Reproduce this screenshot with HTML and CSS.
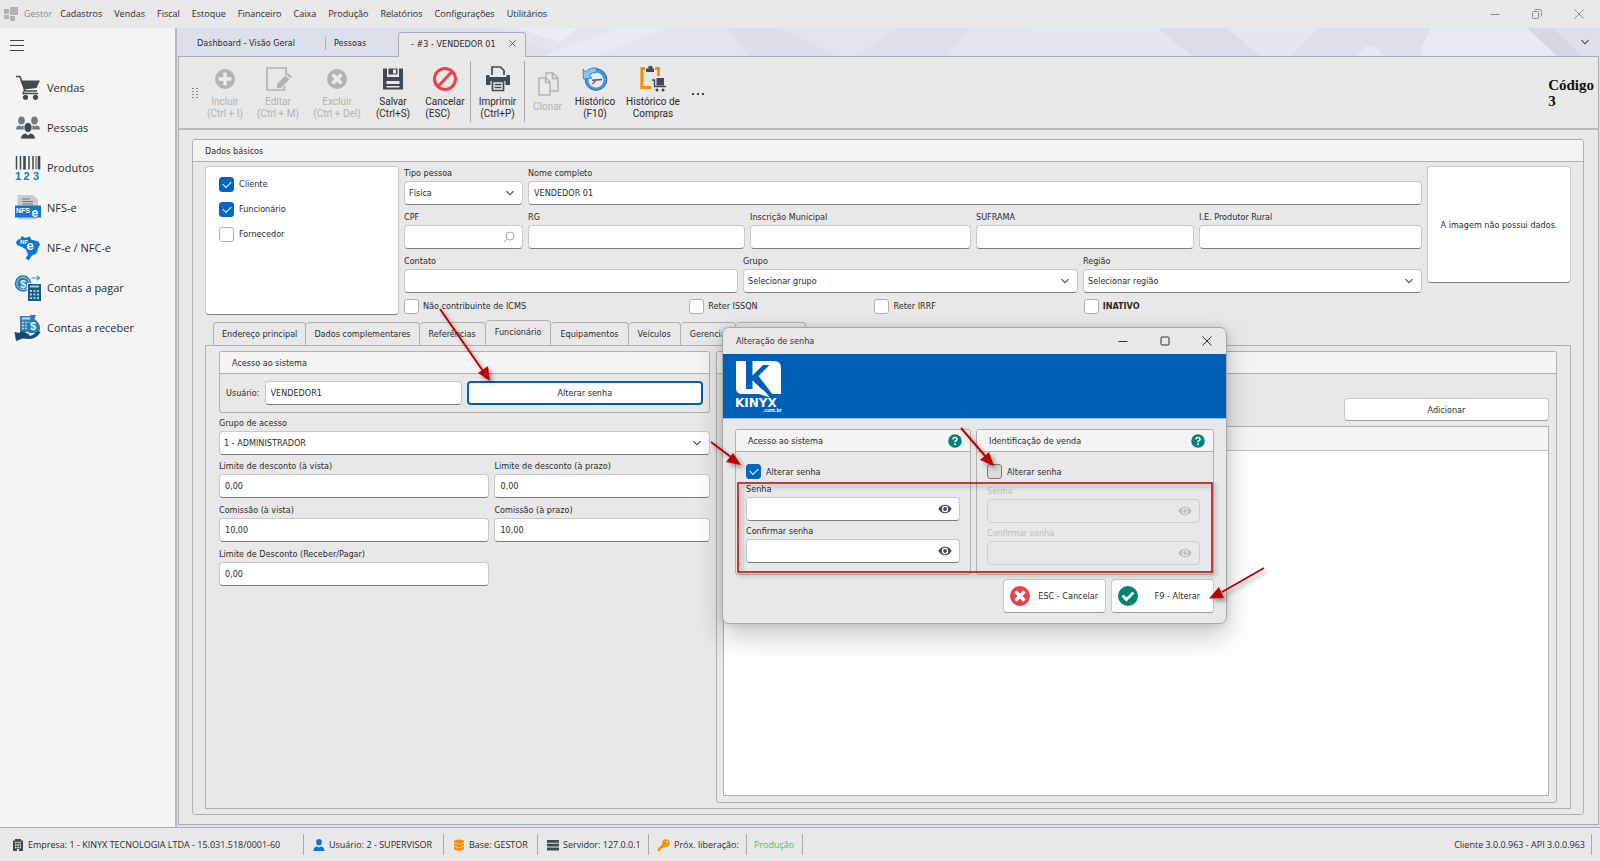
FILE: index.html
```html
<!DOCTYPE html>
<html lang="pt-BR">
<head>
<meta charset="utf-8">
<title>Gestor</title>
<link rel="stylesheet" href="styles.css">
</head>
<body>
<svg class="defs" aria-hidden="true">
  <symbol id="chevron" viewBox="0 0 10 10"><path d="M1.500 3.200 5 6.800 8.500 3.200" fill="none" stroke="#444" stroke-width="1.100"/></symbol>
  <symbol id="eye" viewBox="0 0 14 10"><path d="M.3 5Q3 .8 7 .8T13.700 5Q11 9.200 7 9.200T.3 5z" fill="currentColor"/><circle cx="7" cy="5" r="3.200" fill="var(--hole)"/><circle cx="7" cy="5" r="1.900" fill="currentColor"/></symbol>
  <symbol id="help" viewBox="0 0 14 14"><circle cx="7" cy="7" r="6.800" fill="#008575"/><path d="M5 5.600Q5 3.600 7 3.600T9 5.400Q9 6.500 7.100 7.200V8.300" fill="none" stroke="#fff" stroke-width="1.500"/><circle cx="7.100" cy="10.200" r=".95" fill="#fff"/></symbol>
  <symbol id="close" viewBox="0 0 10 10"><path d="M.5.5 9.500 9.500M9.500.5.5 9.500" fill="none" stroke="currentColor"/></symbol>
</svg>
<div class="app">
  <header class="titlebar">
    <svg class="appicon" viewBox="0 0 14 14"><path d="M0 2h5v5H0zM6 0h8v8H6zM0 8h5v4H0zM6 9h5v5H6z" fill="#b2b2b2"/></svg>
    <span class="brand">Gestor</span>
    <nav class="menu">
      <a href="#">Cadastros</a><a href="#">Vendas</a><a href="#">Fiscal</a><a href="#">Estoque</a><a href="#">Financeiro</a><a href="#">Caixa</a><a href="#">Produção</a><a href="#">Relatórios</a><a href="#">Configurações</a><a href="#">Utilitários</a>
    </nav>
    <div class="winbtns">
      <button aria-label="Minimizar"><svg viewBox="0 0 10 10"><path d="M.5 5.500h9" stroke="currentColor"/></svg></button>
      <button aria-label="Restaurar"><svg viewBox="0 0 10 10"><path d="M.5 3.500q0-1 1-1h4q1 0 1 1v5q0 1-1 1h-4q-1 0-1-1zM2.500 1q.5-.5 1.500-.5h3.500q2 0 2 2V6q0 1-.7 1.500" fill="none" stroke="currentColor"/></svg></button>
      <button aria-label="Fechar"><svg><use href="#close"/></svg></button>
    </div>
  </header>

  <div class="body">
    <aside class="sidebar">
      <button class="burger" aria-label="Menu"><svg viewBox="0 0 14 11"><path d="M0 .5h14M0 5.500h14M0 10.500h14" stroke="#444"/></svg></button>
      <nav>
        <a href="#"><svg viewBox="0 0 26 26"><path d="M1 1.500h4l5 14.500h12M4.500 2" fill="none" stroke="#414a51" stroke-width="1.500"/><path d="M5.600 5.500H25L21.500 13 9 14.500z" fill="#414a51"/><path d="M9.500 15 8 18.500h15" fill="none" stroke="#414a51" stroke-width="1.300"/><circle cx="10.500" cy="22.300" r="2.600" fill="#414a51"/><circle cx="20.500" cy="22.300" r="2.600" fill="#414a51"/></svg>Vendas</a>
        <a href="#"><svg viewBox="0 0 26 26"><g fill="#737b80"><ellipse cx="6.500" cy="5.500" rx="3.300" ry="4"/><ellipse cx="19.500" cy="5.500" rx="3.300" ry="4"/><path d="M1 14.500q0-4 4-4l1.500 1L8 10.500q1.500 0 1.500 1v3zM25 14.500q0-4-4-4l-1.500 1-1.500-1q-1.500 0-1.500 1v3z"/></g><g fill="#414a51" stroke="#f4f4f4" stroke-width=".8"><path d="M5.500 24q0-4.500 5-6l2.500 2 2.500-2q5 1.500 5 6z"/><ellipse cx="13" cy="12.500" rx="4" ry="5"/></g></svg>Pessoas</a>
        <a href="#"><svg viewBox="0 0 26 26"><path d="M1.500 1v13.500M5.500 1v13.500M14 1v13.500M18 1v13.500" stroke="#414a51" stroke-width="1.500"/><path d="M9.500 1v13.500M24 1v13.500" stroke="#414a51" stroke-width="2.600"/><path d="M21 1v13.500" stroke="#414a51"/><text x="0" y="25" class="ic123">1</text><text x="8.500" y="25" class="ic123">2</text><text x="18" y="25" class="ic123">3</text></svg>Produtos</a>
        <a href="#"><svg viewBox="0 0 26 26"><path d="M2.500 0H18l5 4.500V12H2.500zM3 22h19v2.500H3z" fill="#c9cac9"/><path d="M7 4h8M7 6.500h11M7 9h11" stroke="#777"/><rect y="10.500" width="26" height="12" fill="#0b78d3"/><text x="1" y="18" class="icnfs">NFS</text><text x="16.500" y="22" class="ice">e</text></svg>NFS-e</a>
        <a href="#"><svg viewBox="0 0 26 26"><path d="M1 7 3.500 4 5 4.500 7 1l3 2 5-1.500 1 3 7.500 2L25 9.500l-2 4-1.500 5-4.500 2-3.500 5-3-2.500 2.500-3-2-5.500-4-2.500L2 10z" fill="#0b78d3"/><text x="5" y="9" class="icnf">NF</text><text x="11.500" y="15" class="iceb">e</text></svg>NF-e / NFC-e</a>
        <a href="#"><svg viewBox="0 0 26 26"><circle cx="8" cy="8.500" r="8.300" fill="#2c7cae"/><circle cx="8" cy="8.500" r="6.200" fill="none" stroke="#b5d3e4" stroke-width=".9"/><text x="5" y="12.500" class="icd">$</text><path d="M17 3h7M22 .8 24.500 3 22 5.200" fill="none" stroke="#3b9bd0" stroke-width="1.200"/><rect x="12" y="8" width="14.500" height="18" fill="#f4f4f4"/><rect x="13" y="9" width="13" height="17" fill="#185b84"/><path d="M15 11.500h9" stroke="#a9c9dc" stroke-width="2"/><path d="M15 16h9M15 19.500h9M15 23h9" stroke="#a9c9dc" stroke-width="1.800" stroke-dasharray="2 1.500"/></svg>Contas a pagar</a>
        <a href="#"><svg viewBox="0 0 26 26"><rect x="5" y="1" width="12" height="16" fill="#377fa9"/><path d="M7 3.500h8" stroke="#c7dde9" stroke-width="2"/><path d="M7 7.500h8M7 10.500h8M7 13.500h8" stroke="#c7dde9" stroke-width="1.500" stroke-dasharray="1.800 1.300"/><path d="M15 0h6l-1.500 4q5.500 4 5.500 9t-5 5h-6l-2-4q-.500-5 4.500-9z" fill="#2c7cae"/><text x="15" y="15" class="icd">$</text><path d="M-.500 17l4.500 1q3-2.500 6.500-.5l3 1.500q2 1 0 2 4 0 8-4 2-1.500 4 0-4 7-11 7-4-.500-7-.5L1 26z" fill="#134d73"/></svg>Contas a receber</a>
      </nav>
    </aside>

    <main class="work">
      <div class="doctabs">
        <svg class="art" viewBox="0 0 1422 28" preserveAspectRatio="none"><rect width="1422" height="28" fill="#dbe0ea"/><path d="M320 0H870L900 28H380z" fill="#e1e5ee"/><path d="M340 0h60l-18 14z" fill="#eceef5"/><path d="M365 28 440 0h50l-70 28z" fill="#e8ebf4"/><path d="M550 0h50l60 28h-90z" fill="#dadfe9"/><path d="M680 28 720 0h70l-20 28z" fill="#dce0ea"/><path d="M860 0h120l35 28H800z" fill="#e4e7f0"/><path d="M982 0h68l33 28h-68z" fill="#d8dde8"/><path d="M1050 0h90l-25 28h-32z" fill="#e3e7f0"/><path d="M1140 0h120l-10 28h-130z" fill="#dce0ea"/><path d="M1180 28q9-15 18-9l10 9z" fill="#e6e9f1"/><path d="M1254 0h98l38 28H1246q-5-3 0-12z" fill="#e7eaf1"/><path d="M1350 0h25l30 28h-25z" fill="#d3d8e3"/></svg>
        <button class="dt first">Dashboard - Visão Geral</button>
        <button class="dt second">Pessoas</button>
        <button class="dt on">- #3 - VENDEDOR 01 <svg><use href="#close"/></svg></button>
        <button class="more" aria-label="Abas"><svg><use href="#chevron"/></svg></button>
      </div>
      <div class="doc">
        <div class="ribbon">
          <svg class="grip" viewBox="0 0 6 10"><path d="M0 .5h2M0 3.500h2M0 6.500h2M0 9.500h2M4 .5h2M4 3.500h2M4 6.500h2M4 9.500h2" stroke="#888"/></svg>
          <button class="rb w46" disabled><svg viewBox="0 0 26 26"><circle cx="13" cy="13" r="10" fill="#b3b3b3"/><path d="M13 6.500v13M6.500 13h13" stroke="#ececec" stroke-width="3.400"/></svg><span>Incluir<br>(Ctrl + I)</span></button>
          <button class="rb w60" disabled><svg viewBox="0 0 26 26"><path d="M21 9V2H2v22h17.500v-4" fill="none" stroke="#b3b3b3" stroke-width="1.700"/><path d="M12.500 17.500 20.500 9.500l4 4-8 8-5 1zM21.500 8.500 23 7l4 4-1.500 1.500z" fill="#b3b3b3"/></svg><span>Editar<br>(Ctrl + M)</span></button>
          <button class="rb w58" disabled><svg viewBox="0 0 26 26"><circle cx="13" cy="13" r="10" fill="#b3b3b3"/><path d="M8.500 8.500l9 9M17.500 8.500l-9 9" stroke="#ececec" stroke-width="3.400"/></svg><span>Excluir<br>(Ctrl + Del)</span></button>
          <button class="rb w54"><svg viewBox="0 0 26 26"><path d="M3 2.500h4V11h12V2.500h4v21H3z" fill="#414a51"/><path d="M8.500 2.500h9v7h-9zM6.500 15h13v3h-13zM6.500 20h13v1.500h-13z" fill="#e8e8e8"/><path d="M8.500 2.500h9v6h-9z" fill="#414a51"/><path d="M13 3.500h3v4h-3z" fill="#e8e8e8"/></svg><span>Salvar<br>(Ctrl+S)</span></button>
          <button class="rb w50 start"><svg viewBox="0 0 26 26"><circle cx="13" cy="13" r="10.500" fill="none" stroke="#e8424f" stroke-width="3"/><path d="M20 5.500 6 20.500" stroke="#e8424f" stroke-width="3"/></svg><span>Cancelar<br>(ESC)</span></button>
          <button class="rb w54 sep"><svg viewBox="0 0 26 26"><path d="M7 9V1h8.500L19 4.500V9" fill="none" stroke="#414a51" stroke-width="1.700"/><path d="M2 9h2.500v2h17V9H24q1 0 1 1v9h-4.500v-4h-15v4H1v-9q0-1 1-1z" fill="#414a51"/><path d="M7.500 15.500h11v9h-11z" fill="#eee" stroke="#414a51" stroke-width="1.700"/><path d="M9.500 18.500h7M9.500 21.500h7" stroke="#414a51" stroke-width="1.300"/></svg><span>Imprimir<br>(Ctrl+P)</span></button>
          <button class="rb w46 sep mid" disabled><svg viewBox="0 0 26 26"><path d="M4 7h7l4 4v13H4z" fill="#eaeaea" stroke="#b3b3b3" stroke-width="1.500"/><path d="M11 7V2h7l5 5v13h-8" fill="none" stroke="#b3b3b3" stroke-width="1.500"/><path d="M17.500 2v5.500H23M10.500 7v4.500H15" fill="none" stroke="#b3b3b3" stroke-width="1.500"/></svg><span>Clonar</span></button>
          <button class="rb w50"><svg viewBox="0 0 26 26"><circle cx="14" cy="13.500" r="10.800" fill="#4b93d8" stroke="#2b6fb4"/><circle cx="14" cy="14" r="7.600" fill="#dfeefb"/><path d="M1 3l2.500 3Q8 1 15 2l-1 4.500Q10 6 7.500 9.500L10 12l-8.500 1z" fill="#8cc3f0" stroke="#2f76ba" stroke-width=".8"/><path d="M10 14.200 20 13.500" stroke="#415c78" stroke-width="1.500"/><path d="M14 14l-3.500 4" stroke="#e34b3a" stroke-width="1.500"/></svg><span>Histórico<br>(F10)</span></button>
          <button class="rb w66"><svg viewBox="0 0 26 26"><path d="M5 2.500H1.800v19H11M15 2.500h3.500V10" fill="none" stroke="#ff8c00" stroke-width="2.800"/><path d="M5.500 0H15v7H5.500z" fill="#e8e8e8"/><path d="M6 2.500h2.500V0h4v2.500H14V6H6zM16.500 12H24v7.500h-7.500z" fill="#414a51"/><path d="M12 14h2.500v6.500H26" fill="none" stroke="#414a51" stroke-width="1.400"/><circle cx="17" cy="24" r="1.500" fill="#414a51"/><circle cx="23" cy="24" r="1.500" fill="#414a51"/></svg><span>Histórico de<br>Compras</span></button>
          <button class="dots" aria-label="Mais"><svg viewBox="0 0 12 2"><path d="M0 0h2v2H0zM5 0h2v2H5zM10 0h2v2h-2z" fill="#444"/></svg></button>
          <div class="code">Código<br>3</div>
        </div>

        <section class="panel basic">
          <h2>Dados básicos</h2>
          <div class="pbody">
            <div class="top">
              <div class="roles">
                <label><input type="checkbox" checked>Cliente</label>
                <label><input type="checkbox" checked>Funcionário</label>
                <label><input type="checkbox">Fornecedor</label>
              </div>
              <div class="fields">
                <div class="row r1">
                  <label class="f">Tipo pessoa<span class="sel"><select><option>Física</option></select><svg><use href="#chevron"/></svg></span></label>
                  <label class="f">Nome completo<input type="text" value="VENDEDOR 01"></label>
                </div>
                <div class="row r2">
                  <label class="f">CPF<span class="sel"><input type="text"><svg class="lens" viewBox="0 0 12 12"><circle cx="7" cy="5" r="4" fill="none" stroke="#aaa"/><path d="M4.200 8 1 11.200" stroke="#aaa"/></svg></span></label>
                  <label class="f">RG<input type="text"></label>
                  <label class="f">Inscrição Municipal<input type="text"></label>
                  <label class="f">SUFRAMA<input type="text"></label>
                  <label class="f">I.E. Produtor Rural<input type="text"></label>
                </div>
                <div class="row r3">
                  <label class="f">Contato<input type="text"></label>
                  <label class="f">Grupo<span class="sel"><select><option>Selecionar grupo</option></select><svg><use href="#chevron"/></svg></span></label>
                  <label class="f">Região<span class="sel"><select><option>Selecionar região</option></select><svg><use href="#chevron"/></svg></span></label>
                </div>
                <div class="checks">
                  <label><input type="checkbox">Não contribuinte de ICMS</label>
                  <label><input type="checkbox">Reter ISSQN</label>
                  <label><input type="checkbox">Reter IRRF</label>
                  <label><input type="checkbox"><b>INATIVO</b></label>
                </div>
              </div>
              <div class="photo">A imagem não possui dados.</div>
            </div>

            <div class="tabs">
              <button>Endereço principal</button><button>Dados complementares</button><button>Referências</button><button class="on">Funcionário</button><button>Equipamentos</button><button>Veículos</button><button>Gerencia</button><button class="blank" aria-label="Outros"></button>
            </div>
            <div class="page">
              <div class="left">
                <section class="panel access">
                  <h2>Acesso ao sistema</h2>
                  <div class="user"><label for="usr">Usuário:</label><input id="usr" type="text" value="VENDEDOR1"><button class="btn focus">Alterar senha</button></div>
                </section>
                <label class="f">Grupo de acesso<span class="sel"><select><option>1 - ADMINISTRADOR</option></select><svg><use href="#chevron"/></svg></span></label>
                <div class="two">
                  <label class="f">Limite de desconto (à vista)<input type="text" value="0,00"></label>
                  <label class="f">Limite de desconto (à prazo)<input type="text" value="0,00"></label>
                  <label class="f">Comissão (à vista)<input type="text" value="10,00"></label>
                  <label class="f">Comissão (à prazo)<input type="text" value="10,00"></label>
                  <label class="f">Limite de Desconto (Receber/Pagar)<input type="text" value="0,00"></label>
                </div>
              </div>
              <section class="panel right">
                <h2></h2>
                <div class="rbody">
                  <button class="btn add">Adicionar</button>
                  <div class="grid"><div class="ghead"></div></div>
                </div>
              </section>
            </div>
          </div>
        </section>
      </div>
    </main>
  </div>

  <footer class="status">
    <span class="s1"><svg viewBox="0 0 12 12"><path d="M3 0h6v1.500h2V12H1V1.500h2z" fill="#414a51"/><path d="M3 3.500h6M3 6h6M3 8.500h6" stroke="#e8e8e8" stroke-width="1.300" stroke-dasharray="1.500 .75"/><path d="M5 10h2v2H5z" fill="#e8e8e8"/></svg>Empresa: 1 - KINYX TECNOLOGIA LTDA - 15.031.518/0001-60</span>
    <span class="s2"><svg viewBox="0 0 12 12"><ellipse cx="6" cy="3.300" rx="2.800" ry="3.300" fill="#0b78d3"/><path d="M.5 12q0-4 3.500-4.500l2 1 2-1q3.500.5 3.500 4.500z" fill="#0b78d3"/></svg>Usuário: 2 - SUPERVISOR</span>
    <span class="s3"><svg viewBox="0 0 12 12"><path d="M1 2.500Q1 .5 6 .5t5 2v7q0 2-5 2t-5-2z" fill="#ff8c00"/><path d="M1 3.500q0 1.500 5 1.500t5-1.500M1 7q0 1.500 5 1.500T11 7" fill="none" stroke="#e8e8e8" stroke-width=".8"/></svg>Base: GESTOR</span>
    <span class="s4"><svg viewBox="0 0 12 12"><path d="M0 1h12v2.800H0zM0 4.800h12v2.800H0zM0 8.600h12v2.800H0z" fill="#414a51"/></svg>Servidor: 127.0.0.1</span>
    <span class="s5"><svg viewBox="0 0 12 12"><circle cx="8" cy="4" r="3.700" fill="#ff8c00"/><circle cx="9.200" cy="2.900" r="1.100" fill="#e8e8e8"/><path d="M5.500 4 8 6.500 5 9H3.500v1.500H2V12H0V9.500z" fill="#ff8c00"/></svg>Próx. liberação:</span>
    <span class="s6">Produção</span>
    <span class="ver">Cliente 3.0.0.963 - API 3.0.0.963</span>
  </footer>

  <div class="dialog" role="dialog" aria-label="Alteração de senha">
    <div class="dtitle"><span>Alteração de senha</span>
      <button aria-label="Minimizar"><svg viewBox="0 0 10 10"><path d="M.5 5.500h9" stroke="currentColor"/></svg></button>
      <button aria-label="Maximizar"><svg viewBox="0 0 10 10"><rect x="1" y="1" width="8" height="8" rx="1" fill="none" stroke="currentColor"/></svg></button>
      <button aria-label="Fechar"><svg><use href="#close"/></svg></button>
    </div>
    <div class="banner"><svg viewBox="0 0 46 52"><path d="M0 0H38Q45 0 45 7V33H6Q0 33 0 27zM23 33h8l3 3.500z" fill="#fff"/><path d="M10 0h6.500v14.500L27 4h6.500L22.500 15 37 34h-4.500L16.500 19.500V28H10z" fill="#0060b8"/><text x="-1" y="46" class="lg">KINYX</text><text x="27" y="51" class="lgs">.com.br</text></svg></div>
    <div class="dgroups">
      <section class="panel">
        <h2>Acesso ao sistema<svg class="q"><use href="#help"/></svg></h2>
        <div class="db">
          <label class="ck"><input type="checkbox" checked>Alterar senha</label>
          <label class="f">Senha<span class="sel pw"><input type="password"><svg><use href="#eye"/></svg></span></label>
          <label class="f">Confirmar senha<span class="sel pw"><input type="password"><svg><use href="#eye"/></svg></span></label>
        </div>
      </section>
      <section class="panel">
        <h2>Identificação de venda<svg class="q"><use href="#help"/></svg></h2>
        <div class="db off">
          <label class="ck"><input type="checkbox" class="hot">Alterar senha</label>
          <label class="f">Senha<span class="sel pw"><input type="password" disabled><svg><use href="#eye"/></svg></span></label>
          <label class="f">Confirmar senha<span class="sel pw"><input type="password" disabled><svg><use href="#eye"/></svg></span></label>
        </div>
      </section>
    </div>
    <div class="dbtns">
      <button class="btn"><svg viewBox="0 0 20 20"><circle cx="10" cy="10" r="10" fill="#e8424f"/><path d="M5.500 5.500l9 9M14.500 5.500l-9 9" stroke="#fff" stroke-width="3.400"/></svg><span>ESC - Cancelar</span></button>
      <button class="btn"><svg viewBox="0 0 20 20"><circle cx="10" cy="10" r="10" fill="#008575"/><path d="M4.500 9.500 8.500 13.500 15.500 6.500" fill="none" stroke="#fff" stroke-width="2.800"/></svg><span>F9 - Alterar</span></button>
    </div>
  </div>

  <svg class="notes" viewBox="0 0 1600 861" aria-hidden="true">
    <g fill="none" stroke="#c00000" stroke-width="2">
      <rect x="738" y="483" width="474" height="89" stroke-width="1.500"/>
      <path d="M440 309 483 371M711 442 731 457M961 428 986 457M1264 568 1222 592"/>
    </g>
    <g fill="#c00000">
      <path d="M490 381 478 373 488 366z"/><path d="M741 465 726 462 733 453z"/><path d="M994 466 980 460 989 452z"/><path d="M1209 598.500 1219 587 1224 598z"/>
    </g>
  </svg>
</div>
</body>
</html>
```

FILE: styles.css
```css
:root {
  --ui: "Open Sans", "Noto Sans", sans-serif;
  --ribbon: Roboto, "Open Sans", sans-serif;
  --form: "DejaVu Sans Condensed", "Noto Sans", sans-serif;
  --line: #b0b0b0;
  --face: #e8e8e8;
  --ink: #2b2b2b;
  --blue: #0060b8;
}
* { box-sizing: border-box; }
body { margin: 0; font: 9px/12px var(--form); color: var(--ink); }
button, input, select { font: inherit; color: inherit; margin: 0; }
button { border: 0; background: none; padding: 0; }
a { color: inherit; text-decoration: none; }
svg { display: block; flex: none; }
h2 { margin: 0; font: inherit; }
.defs { position: absolute; width: 0; height: 0; }

.app { position: relative; min-height: 100vh; display: flex; flex-direction: column; background: var(--face); overflow: hidden; }

.titlebar { display: flex; align-items: center; height: 28px; padding: 0 16px 0 4px; font: 9px/14px var(--ui); }
.appicon { width: 14px; height: 14px; margin-right: 6px; }
.brand { color: #8d8d8d; margin-right: 8px; }
.menu { display: flex; gap: 12px; }
.winbtns { margin-left: auto; display: flex; gap: 32px; color: #8a8a8a; }
.winbtns svg { width: 10px; height: 10px; }

.body { flex: 1; display: flex; }
.sidebar { width: 177px; flex: none; background: #f4f4f4; border-right: 2px solid #b4b8bf; border-bottom: 1px solid var(--line); padding: 12px 10px 0; font: 11px/16px var(--ui); }
.burger { display: block; }
.burger svg { width: 14px; height: 11px; }
.sidebar nav { display: flex; flex-direction: column; margin-top: 17px; }
.sidebar nav a { display: flex; align-items: center; gap: 6px; height: 40px; padding-left: 5px; }
.sidebar nav svg { width: 26px; height: 26px; overflow: visible; }
.ic123 { font: bold 11px "Liberation Sans", sans-serif; fill: #0b78d3; }
.icnfs { font: bold 7px "Liberation Sans", sans-serif; fill: #fff; }
.ice { font: bold 12px "Liberation Sans", sans-serif; fill: #fff; }
.icnf { font: bold 6px "Liberation Sans", sans-serif; fill: #fff; }
.iceb { font: bold 13px "Liberation Sans", sans-serif; fill: #fff; }
.icd { font: bold 11px "Liberation Sans", sans-serif; fill: #e3f0f7; }

.work { flex: 1; min-width: 0; display: flex; flex-direction: column; background: #dbe0ea; padding: 0 1px 2px; border-bottom: 1px solid var(--line); }
.doctabs { position: relative; display: flex; align-items: flex-end; height: 28px; }
.art { position: absolute; top: 0; left: 0; width: 100%; height: 28px; }
.dt { position: relative; height: 27px; text-align: left; }
.dt.first { width: 148px; padding-left: 19px; }
.dt.first::after { content: ""; position: absolute; right: 0; top: 8px; width: 1px; height: 13px; background: #a9adb5; }
.dt.second { width: 72px; padding-left: 8px; }
.dt.on { display: flex; align-items: center; justify-content: space-between; width: 128px; height: 25px; margin-bottom: -1px; padding: 0 9px 3px 12px; background: var(--face); border: 1px solid #a9adb5; border-bottom: 0; border-radius: 4px 4px 0 0; z-index: 1; }
.dt.on svg { width: 7px; height: 7px; }
.more { position: relative; margin: 0 9px 9px auto; }
.more svg { width: 10px; height: 10px; }
.doc { flex: 1; display: flex; flex-direction: column; background: var(--face); border: 1px solid #a9adb5; }

.ribbon { display: flex; align-items: stretch; height: 73px; padding: 4px 4px 6px 13px; border-bottom: 2px solid #b9b9b9; font: 10px/12px var(--ribbon); }
.grip { width: 6px; height: 10px; align-self: center; margin: 3px 4px 0 0; }
.rb { display: flex; flex-direction: column; align-items: center; padding-top: 5px; white-space: nowrap; }
.rb svg { width: 26px; height: 26px; overflow: visible; margin-bottom: 4px; }
.rb:disabled { color: #b3b3b3; }
.rb.start { text-align: left; }
.rb.mid { padding-top: 10px; }
.sep { border-left: 1px solid #aaa; }
.w46 { width: 46px; } .w50 { width: 50px; } .w54 { width: 54px; } .w58 { width: 58px; } .w60 { width: 60px; } .w66 { width: 66px; }
.dots { align-self: center; margin: 5px 0 0 6px; }
.dots svg { width: 12px; height: 2px; }
.code { margin-left: auto; padding-top: 16px; font: bold 15px/16px "Liberation Serif", serif; color: #111; }

.panel { border: 1px solid var(--line); border-radius: 3px; }
.panel > h2 { display: flex; align-items: center; justify-content: space-between; height: 22px; padding: 0 12px; background: #f4f4f4; border-bottom: 1px solid var(--line); border-radius: 2px 2px 0 0; }
.basic { flex: 1; display: flex; flex-direction: column; margin: 9px 14px 9px 13px; }
.pbody { flex: 1; display: flex; flex-direction: column; padding: 4px 12px 5px; }
.top { display: flex; gap: 5px; align-items: flex-start; }
.roles { width: 194px; height: 149px; padding: 9px 13px; }
.roles, .photo { background: #fff; border: 1px solid #c8c8c8; border-bottom-color: #808080; border-radius: 4px; }
.roles label { display: flex; align-items: center; gap: 5px; height: 16px; margin-bottom: 9px; }
.photo { width: 144px; height: 117px; display: flex; align-items: center; justify-content: center; }
.fields { flex: 1; min-width: 0; }

.row { display: grid; gap: 5px; margin-bottom: 5px; }
.r1 { grid-template-columns: 119px 1fr; }
.r2 { grid-template-columns: 119px 217fr 221fr 218fr 223fr; }
.r3 { grid-template-columns: 334fr 335fr 339fr; }
.f { display: block; min-width: 0; line-height: 15px; }
.f input, .f select, .user input { display: block; width: 100%; min-width: 0; height: 24px; padding: 0 5px; background: #fff; border: 1px solid #c8c8c8; border-bottom-color: #7d7d7d; border-radius: 4px; outline: 0; }
.f select { padding-left: 4px; }
select { appearance: none; }
.sel { position: relative; display: block; }
.sel svg { position: absolute; right: 8px; top: 7px; width: 10px; height: 10px; }
.sel svg.lens { width: 12px; height: 12px; top: 6px; }
input[type="checkbox"] { appearance: none; flex: none; position: relative; width: 15px; height: 15px; background: #fff; border: 1px solid #b0b0b0; border-radius: 3px; }
input[type="checkbox"]:checked { background: #0067c0; border-color: #0067c0; }
input[type="checkbox"]:checked::after { content: ""; position: absolute; left: 3px; top: 3px; width: 7px; height: 4px; border: solid #fff; border-width: 0 0 1px 1px; transform: rotate(-45deg); }
.checks { display: grid; grid-template-columns: 285fr 185fr 209fr 338fr; }
.checks label { display: flex; align-items: center; gap: 4px; height: 16px; }

.tabs { display: flex; align-items: flex-end; height: 25px; margin: 5px 0 0 8px; }
.tabs button { height: 23px; padding: 0 8px; border: 1px solid var(--line); border-left-width: 0; border-bottom: 0; border-radius: 4px 4px 0 0; }
.tabs button:first-child { border-left-width: 1px; }
.tabs button:nth-child(n+3) { padding: 0 9px; }
.tabs button.on { height: 26px; margin-bottom: -1px; padding-bottom: 3px; background: var(--face); }
.tabs .blank { width: 70px; }
.page { flex: 1; display: flex; gap: 6px; border: 1px solid var(--line); padding: 5px 13px; }
.left { width: 491px; flex: none; }
.user { display: flex; align-items: center; gap: 5px; padding: 7px 6px; }
.user input { flex: 192; width: 0; }
.user .btn { flex: 241; }
.access { margin-bottom: 3px; }
.btn { height: 23px; background: #fff; border: 1px solid #c8c8c8; border-bottom-color: #9c9c9c; border-radius: 4px; }
.btn.focus { height: 24px; border: 2px solid var(--blue); }
.two { display: grid; grid-template-columns: 271fr 216fr; gap: 5px; margin-top: 4px; }
.right { flex: 1; display: flex; flex-direction: column; }
.rbody { flex: 1; display: flex; flex-direction: column; padding: 24px 7px 6px 6px; }
.add { width: 205px; align-self: flex-end; margin-bottom: 5px; }
.grid { flex: 1; background: #fff; border: 1px solid var(--line); }
.ghead { height: 24px; background: #f4f4f4; border-bottom: 1px solid #c4c4c4; }

.status { display: flex; align-items: center; height: 33px; padding: 0 8px 0 12px; font: 9px/14px var(--ui); }
.status span { display: flex; align-items: center; gap: 4px; height: 21px; padding-left: 9px; border-right: 1px solid #aaa; white-space: nowrap; }
.status svg { width: 12px; height: 12px; }
.status .s1 { width: 292px; padding-left: 0; }
.s2 { width: 140px; } .s3 { width: 94px; } .s4 { width: 111px; } .s5 { width: 98px; }
.status .s6 { width: 56px; padding-left: 7px; color: #4fbf5f; }
.status .ver { margin-left: auto; padding-right: 6px; }

.dialog { position: absolute; left: 722px; top: 327px; width: 505px; background: var(--face); border: 1px solid #a8a8a8; border-radius: 7px; box-shadow: 0 12px 28px rgba(0, 0, 0, .22), 0 0 8px rgba(0, 0, 0, .12); overflow: hidden; padding-bottom: 10px; }
.dtitle { display: flex; align-items: center; gap: 32px; height: 26px; padding: 0 14px 0 13px; color: #333; }
.dtitle span { margin-right: auto; }
.dtitle svg { width: 10px; height: 10px; }
.banner { height: 65px; background: var(--blue); border-bottom: 1px solid #9cc0e4; padding: 7px 13px; }
.banner svg { width: 46px; height: 52px; overflow: visible; }
.lg { font: bold 12px "DejaVu Sans", sans-serif; fill: #fff; }
.lgs { font: bold 5px "Open Sans", sans-serif; fill: #fff; }
.dgroups { display: grid; grid-template-columns: 236fr 238fr; gap: 5px; padding: 10px 12px 0 12px; }
.q { width: 14px; height: 14px; margin-right: -4px; }
.db { padding: 12px 10px 11px; }
.db.off { padding: 12px 13px 9px 10px; }
.ck { display: flex; align-items: center; gap: 5px; height: 15px; margin-bottom: 3px; }
.off .ck { margin-bottom: 5px; }
.db .f + .f { margin-top: 3px; }
.pw { color: #414a51; --hole: #fff; }
.db .pw svg { width: 14px; height: 10px; }
.off .f { color: #bdbdbd; }
.off .pw { color: #bdbdbd; --hole: #e8e8e8; }
.off .f input { background: transparent; border-color: #cfcfcf; }
.off .hot { background: #dadada; border-color: #777; }
.dbtns { display: flex; justify-content: flex-end; gap: 5px; padding: 4px 12px 0; }
.dbtns .btn { display: flex; align-items: center; justify-content: space-between; width: 103px; height: 34px; padding: 0 7px 0 6px; }
.dbtns .btn + .btn { padding-right: 13px; }
.dbtns svg { width: 20px; height: 20px; }

.notes { position: absolute; left: 0; top: 0; width: 1600px; height: 861px; pointer-events: none; filter: drop-shadow(3px 3px 2px rgba(0, 0, 0, .35)); }
```
